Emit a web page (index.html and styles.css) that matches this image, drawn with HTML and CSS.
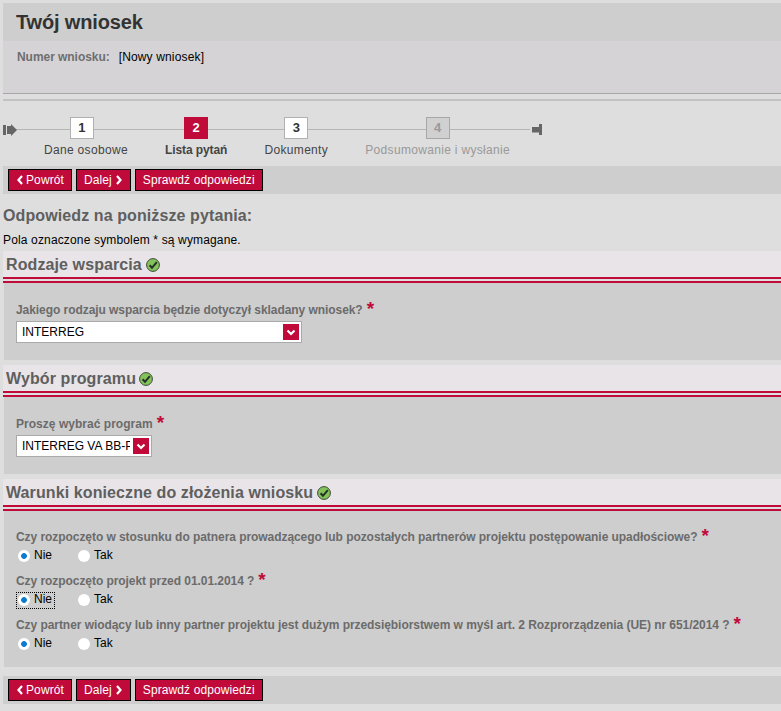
FILE: index.html
```html
<!DOCTYPE html>
<html lang="pl">
<head>
<meta charset="utf-8">
<title>Twój wniosek</title>
<link rel="stylesheet" href="styles.css">
</head>
<body>
<svg class="defs" width="0" height="0" aria-hidden="true">
  <symbol id="ok" viewBox="0 0 14 14">
    <circle cx="7" cy="7" r="6.4" fill="#84c25a" stroke="#3f4a3c"/>
    <path d="M3.600 7.200 6 9.800 10.800 4.200" fill="none" stroke="#26302a" stroke-width="2"/>
  </symbol>
  <symbol id="down" viewBox="0 0 16 16">
    <rect width="16" height="16" fill="#bf0a3a"/>
    <path d="M4.500 6.500 8 10l3.500-3.500" fill="none" stroke="#fff" stroke-width="2.200"/>
  </symbol>
</svg>
<header class="head">
  <h1 class="title">Twój wniosek</h1>
  <div class="info"><span class="info-label">Numer wniosku:</span><span class="info-value">[Nowy wniosek]</span></div>
</header>
<div class="rule"></div>
<nav class="stepper">
  <svg class="cap-start" width="14" height="12" viewBox="0 0 14 12"><path d="M0 1h3v10H0zM4 2h4V0l6 6-6 6v-2H4z" fill="#666"/></svg>
  <svg class="cap-end" width="10" height="11" viewBox="0 0 10 11"><path d="M0 3h7V0h3v11H7V8.500H0z" fill="#666"/></svg>
  <ol class="steps">
    <li class="step step-first"><span class="num">1</span><span class="step-name">Dane osobowe</span></li>
    <li class="step step-active"><span class="num">2</span><span class="step-name">Lista pytań</span></li>
    <li class="step"><span class="num">3</span><span class="step-name">Dokumenty</span></li>
    <li class="step step-off"><span class="num">4</span><span class="step-name">Podsumowanie i wysłanie</span></li>
  </ol>
</nav>
<div class="bar">
  <a class="btn"><svg class="chev" width="8" height="10" viewBox="0 0 8 10"><path d="M6 1 2.500 5 6 9" fill="none" stroke="#fff" stroke-width="2.200"/></svg>Powrót</a>
  <a class="btn">Dalej<svg class="chev chev-r" width="8" height="10" viewBox="0 0 8 10"><path d="M2 1l3.500 4L2 9" fill="none" stroke="#fff" stroke-width="2.200"/></svg></a>
  <a class="btn">Sprawdź odpowiedzi</a>
</div>
<h2 class="lead">Odpowiedz na poniższe pytania:</h2>
<p class="note">Pola oznaczone symbolem * są wymagane.</p>

<section class="sec">
  <h3 class="sec-title">Rodzaje wsparcia<svg class="ok"><use href="#ok"/></svg></h3>
  <div class="panel">
    <div class="q">Jakiego rodzaju wsparcia będzie dotyczył skladany wniosek?<span class="req">*</span></div>
    <div class="select select-wide"><span class="select-text">INTERREG</span><svg class="select-arrow"><use href="#down"/></svg></div>
  </div>
</section>
<section class="sec">
  <h3 class="sec-title sec-title-tight">Wybór programu<svg class="ok"><use href="#ok"/></svg></h3>
  <div class="panel">
    <div class="q q-loose">Proszę wybrać program<span class="req">*</span></div>
    <div class="select select-small"><span class="select-text">INTERREG VA BB-PL</span><svg class="select-arrow"><use href="#down"/></svg></div>
  </div>
</section>
<section class="sec">
  <h3 class="sec-title">Warunki konieczne do złożenia wniosku<svg class="ok"><use href="#ok"/></svg></h3>
  <div class="panel panel-radios">
    <div class="q">Czy rozpoczęto w stosunku do patnera prowadzącego lub pozostałych partnerów projektu postępowanie upadłościowe?<span class="req">*</span></div>
    <div class="radios"><span class="radio-item radio-yes"><i class="radio on"></i>Nie</span><span class="radio-item"><i class="radio"></i>Tak</span></div>
    <div class="q">Czy rozpoczęto projekt przed 01.01.2014 ?<span class="req">*</span></div>
    <div class="radios"><span class="radio-item radio-yes radio-focus"><i class="radio on"></i>Nie</span><span class="radio-item"><i class="radio"></i>Tak</span></div>
    <div class="q">Czy partner wiodący lub inny partner projektu jest dużym przedsiębiorstwem w myśl art. 2 Rozprorządzenia (UE) nr 651/2014 ?<span class="req">*</span></div>
    <div class="radios"><span class="radio-item radio-yes"><i class="radio on"></i>Nie</span><span class="radio-item"><i class="radio"></i>Tak</span></div>
  </div>
</section>
<div class="bar bar-bottom">
  <a class="btn"><svg class="chev" width="8" height="10" viewBox="0 0 8 10"><path d="M6 1 2.500 5 6 9" fill="none" stroke="#fff" stroke-width="2.200"/></svg>Powrót</a>
  <a class="btn">Dalej<svg class="chev chev-r" width="8" height="10" viewBox="0 0 8 10"><path d="M2 1l3.500 4L2 9" fill="none" stroke="#fff" stroke-width="2.200"/></svg></a>
  <a class="btn">Sprawdź odpowiedzi</a>
</div>
</body>
</html>
```
FILE: styles.css
```css
* { box-sizing: border-box; }
html, body { margin: 0; padding: 0; }
body {
  background: #dedede;
  font-family: "Liberation Sans", Arial, sans-serif;
  font-size: 12px;
  color: #000;
  padding-top: 3px;
  height: 711px;
  overflow: hidden;
}
.defs { position: absolute; }
.head { margin-left: 3px; }
.title {
  margin: 0;
  height: 38px;
  background: #cecece;
  color: #333;
  font-size: 20px;
  letter-spacing: -0.15px;
  line-height: 38px;
  padding-left: 13px;
}
.info {
  height: 52px;
  background: #d5d3d6;
  padding: 9px 0 0 14px;
  line-height: 14px;
}
.info-label { font-weight: bold; color: #6e6e6e; margin-right: 9px; letter-spacing: -0.05px; }
.info-value { letter-spacing: 0.15px; }
.rule {
  margin-left: 3px;
  height: 8px;
  border-top: 1px solid #a9a6a9;
  border-bottom: 2px solid #c2c2c2;
}
.stepper { position: relative; height: 65px; }
.stepper::before {
  content: "";
  position: absolute;
  left: 16px;
  width: 514px;
  top: 28px;
  height: 1px;
  background: #b5b5b5;
}
.cap-start { position: absolute; left: 3px; top: 23px; }
.cap-end { position: absolute; left: 532px; top: 23px; }
.steps {
  position: relative;
  display: flex;
  list-style: none;
  margin: 0;
  padding: 16px 0 0 25.4px;
}
.step { padding: 0 18.6px; text-align: center; }
.num {
  display: block;
  width: 24px;
  height: 22px;
  margin: 0 auto;
  background: #fff;
  border: 1px solid #b0b0b0;
  color: #333;
  font-size: 13px;
  font-weight: bold;
  line-height: 20px;
}
.step-first .num { margin-left: 26px; }
.step-name {
  display: block;
  margin-top: 4px;
  color: #444;
  letter-spacing: 0.32px;
  line-height: 14px;
  white-space: nowrap;
}
.step-active .num { background: #bf0a3a; border-color: #bf0a3a; color: #fff; }
.step-active .step-name { font-weight: bold; letter-spacing: -0.1px; }
.step-off .num { background: #d0d0d0; border-color: #a8a8a8; color: #999; }
.step-off .step-name { color: #999; }
.bar {
  display: flex;
  gap: 4px;
  margin-left: 3px;
  height: 28px;
  padding: 3px 0 0 5px;
  background: #cecece;
}
.bar-bottom { margin-top: 9px; }
.btn {
  display: flex;
  align-items: center;
  height: 22px;
  padding: 0 7px;
  background: #bf0a3a;
  border: 1px solid #000;
  color: #fff;
  letter-spacing: 0.1px;
}
.chev { margin-right: 2px; }
.chev-r { margin: 0 0 0 3px; }
.lead {
  margin: 13px 0 0 3px;
  color: #5f5f5f;
  font-size: 16px;
  letter-spacing: 0.1px;
  line-height: 18px;
}
.note { margin: 8px 0 0 3px; letter-spacing: 0.15px; line-height: 14px; }
.sec { margin-bottom: 5px; }
.sec:first-of-type { margin-top: 4px; }
.sec-title {
  display: flex;
  align-items: flex-start;
  margin: 0 0 0 3px;
  height: 32px;
  padding: 1px 0 0 3px;
  background: linear-gradient(#e8e4e7, #e8e4e7) top / 100% 26px no-repeat, #dedede;
  border-bottom: 2px solid #bf0a3a;
  color: #5f5f5f;
  font-size: 16px;
  letter-spacing: 0.1px;
  line-height: 26px;
  position: relative;
}
.sec-title::after {
  content: "";
  position: absolute;
  left: 0;
  right: 0;
  top: 26px;
  height: 2px;
  background: #bf0a3a;
}
.ok { width: 14px; height: 14px; margin: 6px 0 0 4px; }
.sec-title-tight .ok { margin-left: 3px; }
.panel {
  margin-left: 4px;
  height: 77px;
  padding: 17px 0 0 12px;
  background: #cecece;
}
.panel-radios { height: 156px; padding-top: 16px; }
.q {
  color: #6b6b6b;
  font-weight: bold;
  letter-spacing: -0.06px;
  line-height: 16px;
  height: 21px;
  padding-top: 2px;
  white-space: nowrap;
}
.q-loose { letter-spacing: 0.03px; }
.req {
  color: #bf0a3a;
  font-size: 19px;
  letter-spacing: 0;
  margin-left: 4px;
  line-height: 12px;
  vertical-align: -1px;
}
.select {
  display: flex;
  align-items: center;
  justify-content: space-between;
  height: 22px;
  background: #fff;
  border: 1px solid #aaa;
  padding: 0 2px 0 5px;
}
.select-wide { width: 286px; }
.select-small { width: 136px; }
.select-text { flex: 1; min-width: 0; margin-right: 3px; overflow: hidden; white-space: nowrap; }
.select-arrow { width: 16px; height: 16px; flex: none; }
.radios { display: flex; height: 23px; align-items: flex-start; }
.radio-item {
  display: flex;
  align-items: center;
  height: 15px;
  margin-left: 2px;
  line-height: 15px;
  color: #000;
}
.radio-yes { width: 58px; }
.radio-focus { position: relative; }
.radio-focus::after {
  content: "";
  position: absolute;
  left: -2px;
  top: 0;
  width: 37px;
  height: 15px;
  border: 1px dotted #000;
}
.radio {
  display: block;
  width: 12px;
  height: 12px;
  margin-right: 4px;
  background: #fff;
  border-radius: 50%;
}
.radio.on { background: radial-gradient(circle, #0a7bd0 0 2.500px, #fff 3.200px); }
```
